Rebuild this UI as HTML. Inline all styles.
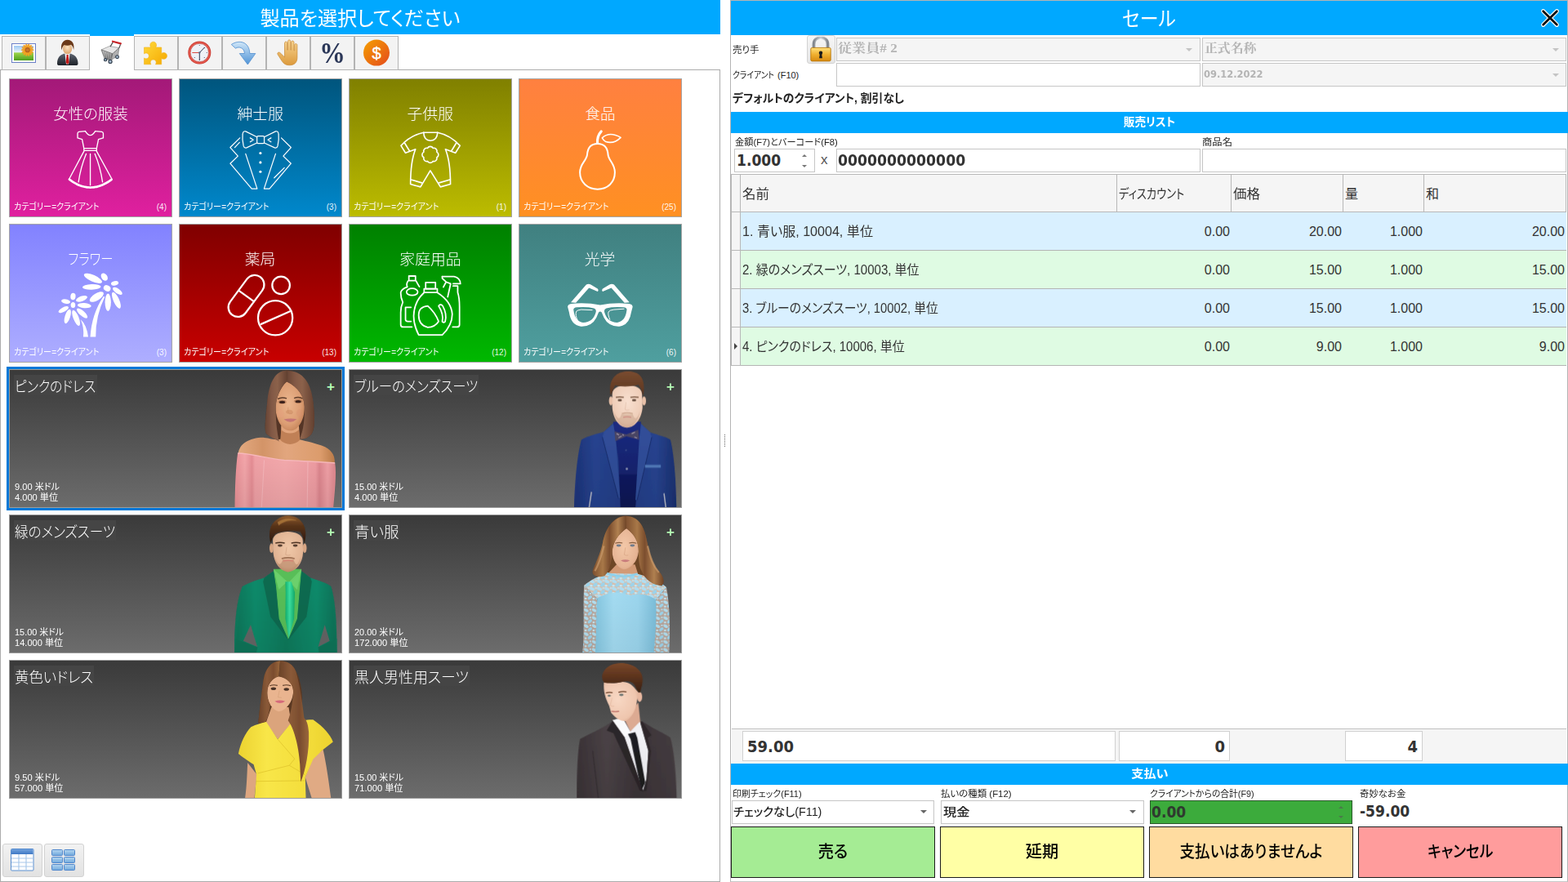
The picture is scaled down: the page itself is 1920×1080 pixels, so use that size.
<!DOCTYPE html>
<html lang="ja">
<head>
<meta charset="utf-8">
<title>セール</title>
<style>
*{box-sizing:border-box;margin:0;padding:0}
html,body{width:1920px;height:1080px;overflow:hidden;background:#fff}
body{position:relative;font-family:"Liberation Sans","Noto Sans CJK JP",sans-serif;color:#222;font-size:12px;font-feature-settings:"palt" 1}
.a{position:absolute}
.t{position:absolute;white-space:nowrap;line-height:1}
.hdr{position:absolute;background:#00a8ff}
#lp{left:0;top:85px;width:882px;height:995px;border:1px solid #ababab;background:#fff}
.tab{position:absolute;top:44px;width:54px;height:42px;background:#f3f3f3;border:1px solid #b4b4b4}
.tab svg{position:absolute;left:0;top:0}
.cat{position:absolute;width:200px;height:170px;border:1px solid #a4a4a4;color:#fff}
.cat .nm{position:absolute;left:0;right:0;top:32px;text-align:center;font-size:18.5px;line-height:21px;font-weight:300;white-space:nowrap}
.cat .cl{position:absolute;left:5px;top:149px;font-size:11px;line-height:14px;white-space:nowrap;transform-origin:0 0}
.cat .ct{position:absolute;right:6px;top:150px;font-size:10px;line-height:14px;white-space:nowrap;color:rgba(255,255,255,.92)}
.cat svg{position:absolute;left:0;top:0}
.prd{position:absolute;width:408px;height:170px;border:1px solid #9c9c9c;color:#fff;background:linear-gradient(#3a3a3a,#6c6c6c);overflow:hidden}
.prd .nm{position:absolute;left:5px;top:6px;font-size:18.5px;line-height:30px;height:25px;font-weight:300;background:#454545;padding:0 1px;white-space:nowrap}
.prd .pr{position:absolute;left:6px;top:137px;font-size:11px;line-height:13px;white-space:nowrap}
.prd .pl{position:absolute;left:388px;top:12px;font-size:17px;font-weight:bold;color:#b4ffb4;line-height:17px}
.prd svg{position:absolute;top:0}
.inp{position:absolute;border:1px solid #c6c6c6;background:#fff}
.dis{background:#f5f5f5}
.lbl{position:absolute;white-space:nowrap;font-size:11px;line-height:14px;color:#222}
.bar{position:absolute;left:895px;width:1025px;height:26px;background:#00a8ff;color:#fff;text-align:center;font-weight:bold;font-size:14px;line-height:25px}
.th{position:absolute;top:213px;height:47px;background:#f5f5f5;border-top:1px solid #b8b8b8;border-right:1px solid #b8b8b8;border-bottom:1px solid #b8b8b8;font-size:16px;line-height:47px;color:#333;white-space:nowrap;padding-left:2px}
.row{position:absolute;left:907px;width:1011px;height:47px;border-bottom:1px solid #b4b4b4;font-size:16px;line-height:46px;color:#333}
.row>span{position:absolute;top:1px;white-space:nowrap}
.row .r{text-align:right}
.ind{position:absolute;left:895px;width:12px;height:47px;background:#f5f5f5;border-left:1px solid #b8b8b8;border-right:1px solid #b8b8b8;border-bottom:1px solid #b8b8b8}
.btn{position:absolute;top:1012px;width:250px;height:63px;border:1px solid #1c1c1c;text-align:center;font-size:20px;font-weight:500;color:#000;line-height:60px;white-space:nowrap}
.fw{display:inline-block;white-space:nowrap;transform-origin:0 50%}
.fc{transform-origin:50% 50%}
.fr{transform-origin:100% 50%}
.bn{font-family:"DejaVu Sans","Noto Sans CJK JP",sans-serif;font-weight:bold}
</style>
</head>
<body>
<div class="hdr" style="left:0;top:0;width:882px;height:42px"></div>
<div class="t" style="left:0;width:882px;top:11px;text-align:center;color:#fff;font-size:24px"><span class="fw fc" style="transform:scaleX(1.004)">製品を選択してください</span></div>
<div class="a" id="lp"></div>
<div class="a" style="left:887px;top:532px;width:1px;height:16px;background:repeating-linear-gradient(#666 0 1px,#fff 1px 2px)"></div>
<div class="a" style="left:3px;top:1033px;width:49px;height:41px;border:1px solid #d2d2d2;border-radius:3px;background:linear-gradient(#f2f2f2,#e2e2e2)">
<svg class="a" style="left:9px;top:5px" width="29" height="28" viewBox="0 0 29 28"><defs><linearGradient id="tb1" x1="0" y1="0" x2="0" y2="1"><stop offset="0" stop-color="#6fa0dc"/><stop offset="1" stop-color="#3f78c4"/></linearGradient><linearGradient id="tb2" x1="0" y1="0" x2="0" y2="1"><stop offset="0" stop-color="#b4d6f0"/><stop offset="1" stop-color="#6fa8dc"/></linearGradient></defs><rect x="0.5" y="0.5" width="27.5" height="26.5" rx="1" fill="#fff" stroke="#5b8fd0"/><rect x="1" y="1" width="26.500" height="6" fill="url(#tb1)"/><g stroke="#a9c8ea" stroke-width="1.2" fill="none"><path d="M1 12h27M1 17h27M1 22h27M10 7v20M19 7v20"/></g></svg></div>
<div class="a" style="left:54px;top:1033px;width:49px;height:41px;border:1px solid #d2d2d2;border-radius:3px;background:linear-gradient(#f2f2f2,#e2e2e2)">
<svg class="a" style="left:8px;top:6px" width="30" height="27" viewBox="0 0 30 27"><g fill="url(#tb2)" stroke="#4f86cc"><rect x="0.5" y="0.5" width="13" height="7" rx="1"/><rect x="15.500" y="0.5" width="13" height="7" rx="1"/><rect x="0.5" y="9.500" width="13" height="7" rx="1"/><rect x="15.500" y="9.500" width="13" height="7" rx="1"/><rect x="0.5" y="18.500" width="13" height="7" rx="1"/><rect x="15.500" y="18.500" width="13" height="7" rx="1"/></g></svg></div>

<div class="tab" style="left:2px"></div>
<div class="tab" style="left:56px"></div>
<div class="tab" style="left:164px"></div>
<div class="tab" style="left:218px"></div>
<div class="tab" style="left:272px"></div>
<div class="tab" style="left:326px"></div>
<div class="tab" style="left:380px"></div>
<div class="tab" style="left:434px"></div>
<div class="a" style="left:110px;top:42px;width:54px;height:45px;background:#fff;border-top:2px solid #00a8ff"></div>
<div class="t" style="left:388px;top:43px;width:38px;height:40px;font-family:'Liberation Serif',serif;font-weight:bold;font-size:35px;line-height:45px;color:#2b3758;text-align:center;transform:scaleX(.90);transform-origin:50% 50%">%</div>
<svg class="a" style="left:0;top:38px" width="500" height="54" viewBox="0 38 500 54">
<defs>
<linearGradient id="gsky" x1="0" y1="0" x2="0" y2="1"><stop offset="0" stop-color="#9fc9f3"/><stop offset=".42" stop-color="#e4f1fa"/><stop offset=".5" stop-color="#9ad44a"/><stop offset="1" stop-color="#4e9e1e"/></linearGradient>
<linearGradient id="gsuit" x1="0" y1="0" x2="0" y2="1"><stop offset="0" stop-color="#5d6470"/><stop offset="1" stop-color="#1d2128"/></linearGradient>
<linearGradient id="gpuz" x1="0" y1="0" x2="1" y2="1"><stop offset="0" stop-color="#ffd93a"/><stop offset="1" stop-color="#f5a800"/></linearGradient>
<linearGradient id="garr" x1="0" y1="0" x2="0" y2="1"><stop offset="0" stop-color="#cfe6f8"/><stop offset="1" stop-color="#4f93d6"/></linearGradient>
<linearGradient id="ghand" x1="0" y1="0" x2="0" y2="1"><stop offset="0" stop-color="#f8d592"/><stop offset="1" stop-color="#dc9a3c"/></linearGradient>
<linearGradient id="gcoin" x1="0" y1="0" x2="1" y2="1"><stop offset="0" stop-color="#f5a000"/><stop offset="1" stop-color="#e44a1c"/></linearGradient>
<linearGradient id="gcart" x1="0" y1="0" x2="0" y2="1"><stop offset="0" stop-color="#b4b4b4"/><stop offset="1" stop-color="#505050"/></linearGradient>
<radialGradient id="gface" cx=".5" cy=".4" r=".6"><stop offset="0" stop-color="#fbe3c4"/><stop offset="1" stop-color="#dba46c"/></radialGradient>
</defs>
<!-- picture -->
<rect x="14.5" y="53.5" width="29" height="23" fill="#fff" stroke="#6c80c8"/>
<rect x="17" y="56" width="24" height="18" fill="url(#gsky)"/>
<g fill="#f5a623" stroke="#e98a1c" stroke-width=".3"><ellipse cx="38.30" cy="61.20" rx="3.1" ry="1.15" transform="rotate(0 38.30 61.20)"/><ellipse cx="37.84" cy="63.20" rx="3.1" ry="1.15" transform="rotate(26 37.84 63.20)"/><ellipse cx="36.57" cy="64.80" rx="3.1" ry="1.15" transform="rotate(51 36.57 64.80)"/><ellipse cx="34.72" cy="65.68" rx="3.1" ry="1.15" transform="rotate(77 34.72 65.68)"/><ellipse cx="32.68" cy="65.68" rx="3.1" ry="1.15" transform="rotate(103 32.68 65.68)"/><ellipse cx="30.83" cy="64.80" rx="3.1" ry="1.15" transform="rotate(129 30.83 64.80)"/><ellipse cx="29.56" cy="63.20" rx="3.1" ry="1.15" transform="rotate(154 29.56 63.20)"/><ellipse cx="29.10" cy="61.20" rx="3.1" ry="1.15" transform="rotate(180 29.10 61.20)"/><ellipse cx="29.56" cy="59.20" rx="3.1" ry="1.15" transform="rotate(206 29.56 59.20)"/><ellipse cx="30.83" cy="57.60" rx="3.1" ry="1.15" transform="rotate(231 30.83 57.60)"/><ellipse cx="32.68" cy="56.72" rx="3.1" ry="1.15" transform="rotate(257 32.68 56.72)"/><ellipse cx="34.72" cy="56.72" rx="3.1" ry="1.15" transform="rotate(283 34.72 56.72)"/><ellipse cx="36.57" cy="57.60" rx="3.1" ry="1.15" transform="rotate(309 36.57 57.60)"/><ellipse cx="37.84" cy="59.20" rx="3.1" ry="1.15" transform="rotate(334 37.84 59.20)"/></g>
<circle cx="33.7" cy="61.2" r="3.1" fill="#b5621e"/><circle cx="33.7" cy="61.2" r="1.8" fill="#c9772a"/>
<!-- user -->
<path d="M70 78c0-8 4-11 9-12.500l3.500 3 3.500-3c5 1.500 9.500 4.500 9.500 12.500c0 1.500-1 2-2.500 2h-20.500c-1.500 0-2.500-.5-2.500-2z" fill="url(#gsuit)"/>
<path d="M79.500 65.500l3 3 3-3-1.500 13h-3z" fill="#fff"/>
<path d="M81.600 67h2l.9 9.500-1.900 2.500-1.900-2.500z" fill="#c41818"/>
<ellipse cx="82.600" cy="59.500" rx="5.600" ry="6.800" fill="url(#gface)"/>
<path d="M75.400 61.500c-1.600-7 1.600-12.700 7.300-12.700c5.700 0 9 5 7.400 12.500c-.4-3.400-1.400-5.400-3.400-6.600c-2.400 1.200-5.800 1.200-8 .2c-1.800 1.400-2.800 3.600-3.300 6.600z" fill="#6b3a1a"/>
<!-- cart -->
<g transform="translate(0,30) scale(.14583)">
<path d="M850 212L920 182L1000 196L945 246Z" fill="#e6e6e6" stroke="#7a7a7a" stroke-width="4"/>
<path d="M850 212L945 246L928 302L878 286Z" fill="url(#gcart)" stroke="#5e5e5e" stroke-width="4"/>
<path d="M945 246L1000 196L990 262L928 302Z" fill="#9c9c9c" stroke="#5e5e5e" stroke-width="4"/>
<path d="M868 222l14 62M886 228l12 62M905 234l9 62M925 241l2 58" stroke="#dcdcdc" stroke-width="4" fill="none"/>
<path d="M960 236l-10 52M975 222l-8 54M988 210l-6 54" stroke="#e0e0e0" stroke-width="4" fill="none"/>
<path d="M948 148L926 186M1012 166L1000 198" stroke="#4a4a4a" stroke-width="8" fill="none"/>
<path d="M946 142L1014 160" stroke="#c8262a" stroke-width="15" stroke-linecap="round" fill="none"/>
<g fill="#a8bcd0" stroke="#34414f" stroke-width="8"><circle cx="885" cy="296" r="11"/><circle cx="926" cy="312" r="14"/><circle cx="984" cy="272" r="13"/></g>
</g>
<!-- puzzle -->
<path d="M176.500 58h8.200c-1.800-2.400-.7-6.800 3-6.800s4.800 4.400 3 6.800h7v7.400c2.400-1.800 6.800-.8 6.800 3s-4.400 4.800-6.800 3v7.400h-7.200c1.600-2.400.5-5.800-2.800-5.800s-4.400 3.400-2.800 5.800h-8.400v-7.800c2.400 1.800 5.800.7 5.800-2.600s-3.400-4.400-5.800-2.600z" fill="url(#gpuz)" stroke="#f0b21c" stroke-width=".6"/>
<!-- clock -->
<circle cx="244.300" cy="64.500" r="14" fill="#c63a32"/>
<circle cx="244.300" cy="64.500" r="13.300" fill="#e2554a"/>
<circle cx="244.300" cy="64.500" r="11.200" fill="#eef1f7" stroke="#b8362e" stroke-width=".6"/>
<g fill="#4a556c"><circle cx="244.300" cy="55.500" r=".6"/><circle cx="253.300" cy="64.500" r=".6"/><circle cx="244.300" cy="73.500" r=".6"/><circle cx="250.300" cy="70.500" r=".6"/><circle cx="238.300" cy="70.500" r=".6"/><circle cx="250.600" cy="58.500" r=".6"/></g>
<path d="M244.300 64.500v9.300M244.300 64.500l6.200-6.500" stroke="#2a3650" stroke-width="1" fill="none"/>
<path d="M244.300 64.500h-9" stroke="#d8352c" stroke-width=".9" fill="none"/>
<circle cx="244.300" cy="64.500" r="1.200" fill="#5a6a8a"/>
<!-- arrow -->
<path d="M283.300 54.500c9-6 22-4 22.500 11h7l-9.500 13.500-10-13.500h6.200c-.3-7.200-7.300-9-11-6.300z" fill="url(#garr)" stroke="#5d96d2" stroke-width=".9" stroke-linejoin="round"/>
<!-- hand -->
<g transform="translate(3.500,0) scale(1.06,1) translate(-20,0)"><path d="M345.500 64v-11.300c0-2.200 3-2.200 3 0v8.500h.7v-10.600c0-2.300 3.200-2.300 3.200 0v10.600h.7v-9.400c0-2.300 3.200-2.300 3.200 0v10h.7v-6.600c0-2.200 3-2.200 3 0v15.300c0 6-3.300 9.300-9 9.300c-4.200 0-6.500-1.700-8.700-5.200l-4.800-8c-1-1.900 1.300-3.500 2.900-1.800l5.100 5.200z" fill="url(#ghand)" stroke="#c98a36" stroke-width=".7" stroke-linejoin="round"/></g>
<!-- coin -->
<circle cx="461" cy="64.600" r="16" fill="url(#gcoin)"/>
<text x="461" y="71.500" text-anchor="middle" font-family="Liberation Sans, sans-serif" font-size="20" fill="#fff" stroke="#fff" stroke-width=".4">$</text>
</svg>

<div class="cat" style="left:11px;top:96px;background:linear-gradient(#a31978,#e0209f)"><div class="nm"><span class="fw fc" style="transform:scaleX(0.995)">女性の服装</span></div><div class="cl"><span class="fw" style="transform:scaleX(0.917)">カテゴリー=クライアント</span></div><div class="ct">(4)</div></div>
<svg class="a" style="left:50px;top:120px" width="120" height="120" viewBox="0 0 1080 1080"><g stroke="#fff" fill="none" stroke-linecap="round" stroke-linejoin="round" stroke-width="12">
<path d="M490 365L420 372Q405 375 405 392L405 440L455 455L475 555M600 365L672 372Q688 375 688 392L688 440L635 455L615 555"/>
<path d="M490 365Q545 455 600 365"/>
<rect x="475" y="555" width="140" height="25" rx="6"/>
<path d="M478 582L312 893M612 582L783 893"/>
<path d="M500 615Q440 760 415 925M545 615L545 960M595 615Q655 760 680 925"/>
<path d="M314 897Q545 1075 781 897" stroke-width="24" stroke-dasharray="30 4"/>
</g></svg>
<div class="cat" style="left:219px;top:96px;background:linear-gradient(#00557d,#0088cc)"><div class="nm"><span class="fw fc" style="transform:scaleX(1.018)">紳士服</span></div><div class="cl"><span class="fw" style="transform:scaleX(0.917)">カテゴリー=クライアント</span></div><div class="ct">(3)</div></div>
<svg class="a" style="left:258px;top:120px" width="120" height="120" viewBox="0 0 1080 1080"><g stroke="#fff" fill="none" stroke-linecap="round" stroke-linejoin="round" stroke-width="11">
<path d="M510 430L385 368Q355 360 352 400Q345 460 362 530Q370 555 395 548L510 495"/>
<path d="M590 430L715 368Q745 360 748 400Q755 460 738 530Q730 555 705 548L590 495"/>
<rect x="510" y="420" width="80" height="80" rx="12"/>
<path d="M435 440L470 462L435 484M665 440L630 462L665 484"/>
<path d="M322 440L215 545L300 640L215 722L452 1000L512 1000L385 615"/>
<path d="M778 440L885 545L800 640L885 722L648 1000L588 1000L715 615"/>
<path d="M265 545L318 490M700 880L812 768"/>
</g><g fill="#fff"><circle cx="548" cy="607" r="14"/><circle cx="548" cy="710" r="14"/><circle cx="548" cy="812" r="14"/></g></svg>
<div class="cat" style="left:427px;top:96px;background:linear-gradient(#808000,#bcbc00)"><div class="nm"><span class="fw fc" style="transform:scaleX(1.018)">子供服</span></div><div class="cl"><span class="fw" style="transform:scaleX(0.917)">カテゴリー=クライアント</span></div><div class="ct">(1)</div></div>
<svg class="a" style="left:466px;top:120px" width="120" height="120" viewBox="0 0 1080 1080"><g stroke="#fff" fill="none" stroke-linecap="round" stroke-linejoin="round" stroke-width="15">
<path d="M475 380L628 380"/>
<path d="M475 383Q478 470 550 470Q622 470 628 383"/>
<path d="M475 380Q330 410 225 525L275 605L385 565Q330 700 330 950L440 980L548 800L660 980L770 950Q770 700 715 565L825 605L875 525Q770 410 628 380"/>
<path d="M262 490L320 585M838 490L780 585M335 900L455 935M765 900L645 935"/>
<path d="M518 553A34 34 0 0 1 578 553A34 34 0 0 1 620 595A34 34 0 0 1 620 655A34 34 0 0 1 578 697A34 34 0 0 1 518 697A34 34 0 0 1 476 655A34 34 0 0 1 476 595A34 34 0 0 1 518 553Z"/>
</g></svg>
<div class="cat" style="left:635px;top:96px;background:linear-gradient(#ff8040,#ff9022)"><div class="nm"><span class="fw fc" style="transform:scaleX(1.000)">食品</span></div><div class="cl"><span class="fw" style="transform:scaleX(0.917)">カテゴリー=クライアント</span></div><div class="ct">(25)</div></div>
<svg class="a" style="left:674px;top:120px" width="120" height="120" viewBox="0 0 1080 1080"><g stroke="#fff" fill="none" stroke-linecap="round" stroke-linejoin="round" stroke-width="18">
<path d="M520 505C440 505 410 560 405 625C400 690 325 720 325 820C325 930 410 1005 520 1005C630 1005 710 930 710 820C710 720 640 690 635 625C630 560 600 505 520 505Z"/>
<path d="M518 500Q512 420 560 368" stroke-width="28"/>
<path d="M570 440Q650 365 775 435Q700 510 610 482Q585 468 570 440Z" stroke-width="14"/>
</g></svg>
<div class="cat" style="left:11px;top:274px;background:linear-gradient(#8282ff,#aeaeff)"><div class="nm"><span class="fw fc" style="transform:scaleX(0.833)">フラワー</span></div><div class="cl"><span class="fw" style="transform:scaleX(0.917)">カテゴリー=クライアント</span></div><div class="ct">(3)</div></div>
<svg class="a" style="left:50px;top:298px" width="120" height="120" viewBox="0 0 1080 1080"><g fill="#fff"><ellipse cx="575" cy="385" rx="108" ry="36" transform="rotate(24 575 385)"/><ellipse cx="700" cy="370" rx="32" ry="46" transform="rotate(-35 700 370)"/><ellipse cx="815" cy="440" rx="42" ry="24" transform="rotate(-15 815 440)"/><ellipse cx="560" cy="480" rx="102" ry="30" transform="rotate(-2 560 480)"/><ellipse cx="845" cy="525" rx="62" ry="27" transform="rotate(35 845 525)"/><ellipse cx="615" cy="590" rx="88" ry="38" transform="rotate(-32 615 590)"/><ellipse cx="740" cy="650" rx="33" ry="96" transform="rotate(0 740 650)"/><ellipse cx="832" cy="628" rx="32" ry="98" transform="rotate(-24 832 628)"/><ellipse cx="730" cy="495" rx="40" ry="32" transform="rotate(25 730 495)"/><ellipse cx="355" cy="585" rx="28" ry="38" transform="rotate(5 355 585)"/><ellipse cx="450" cy="610" rx="66" ry="28" transform="rotate(-20 450 610)"/><ellipse cx="275" cy="640" rx="50" ry="24" transform="rotate(10 275 640)"/><ellipse cx="480" cy="685" rx="76" ry="28" transform="rotate(5 480 685)"/><ellipse cx="250" cy="730" rx="62" ry="25" transform="rotate(-28 250 730)"/><ellipse cx="455" cy="770" rx="76" ry="28" transform="rotate(42 455 770)"/><ellipse cx="295" cy="805" rx="29" ry="82" transform="rotate(18 295 805)"/><ellipse cx="388" cy="822" rx="30" ry="92" transform="rotate(-22 388 822)"/><ellipse cx="355" cy="680" rx="25" ry="32" transform="rotate(0 355 680)"/><path d="M690 585Q560 780 545 1030L605 1030Q602 800 705 590Z"/><path d="M438 838Q505 900 522 1030L468 1030Q478 925 438 838Z"/></g></svg>
<div class="cat" style="left:219px;top:274px;background:linear-gradient(#800000,#c80000)"><div class="nm"><span class="fw fc" style="transform:scaleX(1.014)">薬局</span></div><div class="cl"><span class="fw" style="transform:scaleX(0.917)">カテゴリー=クライアント</span></div><div class="ct">(13)</div></div>
<svg class="a" style="left:258px;top:298px" width="120" height="120" viewBox="0 0 1080 1080"><g stroke="#fff" fill="none" stroke-linecap="round" stroke-linejoin="round" stroke-width="20">
<rect x="287" y="320" width="210" height="520" rx="105" transform="rotate(36.5 392 580)"/>
<path d="M310 520L476 640"/>
<circle cx="775" cy="462" r="97"/>
<circle cx="712" cy="822" r="190"/>
<path d="M556 890L884 745"/>
</g></svg>
<div class="cat" style="left:427px;top:274px;background:linear-gradient(#008000,#00b800)"><div class="nm"><span class="fw fc" style="transform:scaleX(1.020)">家庭用品</span></div><div class="cl"><span class="fw" style="transform:scaleX(0.917)">カテゴリー=クライアント</span></div><div class="ct">(12)</div></div>
<svg class="a" style="left:466px;top:298px" width="120" height="120" viewBox="0 0 1080 1080"><g stroke="#fff" fill="none" stroke-linecap="round" stroke-linejoin="round" stroke-width="16">
<path d="M312 360H385V410H312Z"/>
<path d="M302 415Q280 450 295 480Q225 505 222 545Q222 600 245 650Q222 700 222 760V895Q222 922 250 922H345"/>
<path d="M392 415Q410 450 428 478"/>
<ellipse cx="348" cy="535" rx="62" ry="38"/>
<path d="M335 705H275V840Q275 860 300 860H335"/>
<path d="M497 430H605V500H497Z"/>
<path d="M480 500H625V542H480Z"/>
<path d="M480 542Q370 640 365 800Q365 900 420 1010H680Q790 900 790 780Q780 640 625 542"/>
<path d="M420 790Q420 700 520 690Q600 760 640 860Q600 925 520 925Q420 905 420 790Z"/>
<path d="M640 690Q660 660 685 690Q735 780 712 862Q700 880 680 862Q698 780 640 690Z"/>
<path d="M680 365H810Q878 380 880 445H800"/>
<path d="M680 365V385L722 425L692 482M772 445L740 590M722 425L772 445"/>
<path d="M800 470H850V540Q870 600 870 700V895Q870 922 840 922H795"/>
</g></svg>
<div class="cat" style="left:635px;top:274px;background:linear-gradient(#408080,#4f9f9f)"><div class="nm"><span class="fw fc" style="transform:scaleX(1.014)">光学</span></div><div class="cl"><span class="fw" style="transform:scaleX(0.917)">カテゴリー=クライアント</span></div><div class="ct">(6)</div></div>
<svg class="a" style="left:674px;top:298px" width="120" height="120" viewBox="0 0 1080 1080"><g fill="#fff">
<path d="M225 650L395 455Q420 440 445 455L520 500Q535 520 520 530L425 490L280 655Z"/>
<path d="M871 650L701 455Q676 440 651 455L576 500Q561 520 576 530L671 490L816 655Z"/>
<path fill-rule="evenodd" d="M190 700Q190 670 230 665Q400 650 548 680Q700 650 866 665Q906 670 906 700L890 760Q870 900 760 915Q640 920 590 820L565 760Q548 745 531 760L506 820Q456 920 336 915Q226 900 206 760ZM255 735Q250 710 290 705Q400 695 480 715Q510 725 500 760Q470 870 360 872Q270 860 255 735ZM841 735Q846 710 806 705Q696 695 616 715Q586 725 596 760Q626 870 736 872Q826 860 841 735Z"/>
</g>
<g stroke="#fff" fill="none" stroke-width="9" stroke-linecap="round"><path d="M300 850Q270 790 285 750Q295 735 340 730L460 735"/><path d="M655 840Q630 780 640 755Q650 735 700 730L810 722"/></g></svg>

<svg width="0" height="0" style="position:absolute"><defs>
<linearGradient id="h1" x1="0" y1="0" x2="1" y2="0"><stop offset="0" stop-color="#664434"/><stop offset=".3" stop-color="#825945"/><stop offset=".55" stop-color="#8c624b"/><stop offset="1" stop-color="#624030"/></linearGradient>
<linearGradient id="sk1" x1="0" y1="0" x2="1" y2="0"><stop offset="0" stop-color="#e2a981"/><stop offset=".5" stop-color="#e9b892"/><stop offset="1" stop-color="#cf935f"/></linearGradient>
<linearGradient id="sh1" x1="0" y1="0" x2="1" y2="0"><stop offset="0" stop-color="#e3aa80"/><stop offset=".25" stop-color="#d39468"/><stop offset=".5" stop-color="#e2a67e"/><stop offset=".85" stop-color="#dc9c6c"/><stop offset="1" stop-color="#b97a48"/></linearGradient>
<linearGradient id="dr1" x1="0" y1="0" x2="1" y2="0"><stop offset="0" stop-color="#e99096"/><stop offset=".1" stop-color="#f3a6aa"/><stop offset=".17" stop-color="#e58d94"/><stop offset=".2" stop-color="#f0a1a6"/><stop offset=".5" stop-color="#f4a9ac"/><stop offset=".8" stop-color="#ee9ca2"/><stop offset=".84" stop-color="#dd868e"/><stop offset=".92" stop-color="#f0a0a6"/><stop offset="1" stop-color="#dc858c"/></linearGradient>
<linearGradient id="su2" x1="0" y1="0" x2="1" y2="0"><stop offset="0" stop-color="#1c3378"/><stop offset=".2" stop-color="#27438f"/><stop offset=".5" stop-color="#213b84"/><stop offset=".8" stop-color="#27438f"/><stop offset="1" stop-color="#1a2f6e"/></linearGradient>
<linearGradient id="st2" x1="0" y1="0" x2="0" y2="1"><stop offset="0" stop-color="#1b2a80"/><stop offset=".6" stop-color="#16236e"/><stop offset=".62" stop-color="#0f1a60"/><stop offset="1" stop-color="#0c1552"/></linearGradient>
<linearGradient id="h2" x1="0" y1="0" x2="0" y2="1"><stop offset="0" stop-color="#7a4c30"/><stop offset="1" stop-color="#5a3520"/></linearGradient>
<linearGradient id="su3" x1="0" y1="0" x2="1" y2="0"><stop offset="0" stop-color="#0a7458"/><stop offset=".2" stop-color="#118a6a"/><stop offset=".5" stop-color="#0c7a5c"/><stop offset=".8" stop-color="#118a6a"/><stop offset="1" stop-color="#0a7056"/></linearGradient>
<linearGradient id="ti3" x1="0" y1="0" x2="1" y2="0"><stop offset="0" stop-color="#10b070"/><stop offset=".45" stop-color="#3ce0a0"/><stop offset="1" stop-color="#10a868"/></linearGradient>
<linearGradient id="h3" x1="0" y1="0" x2="0" y2="1"><stop offset="0" stop-color="#8e5c2c"/><stop offset=".35" stop-color="#5a341a"/><stop offset="1" stop-color="#2a180e"/></linearGradient>
<linearGradient id="h4" x1="0" y1="0" x2="1" y2="0"><stop offset="0" stop-color="#7e5030"/><stop offset=".3" stop-color="#a87848"/><stop offset=".5" stop-color="#7c4e2e"/><stop offset=".75" stop-color="#b08050"/><stop offset="1" stop-color="#6e4428"/></linearGradient>
<linearGradient id="dr4" x1="0" y1="0" x2="1" y2="0"><stop offset="0" stop-color="#84c6e0"/><stop offset=".3" stop-color="#a4dcf2"/><stop offset=".7" stop-color="#9cd6ee"/><stop offset="1" stop-color="#7cbeda"/></linearGradient>
<pattern id="lace" width="46" height="46" patternUnits="userSpaceOnUse"><rect width="46" height="46" fill="#c9b6ac"/><ellipse cx="12" cy="12" rx="14" ry="8" fill="#a6dbf0" transform="rotate(30 12 12)"/><ellipse cx="34" cy="30" rx="13" ry="8" fill="#8ecfe8" transform="rotate(-40 34 30)"/><ellipse cx="10" cy="38" rx="8" ry="6" fill="#b8e4f4"/></pattern>
<linearGradient id="h5" x1="0" y1="0" x2="1" y2="0"><stop offset="0" stop-color="#6a4228"/><stop offset=".4" stop-color="#8a5a38"/><stop offset=".7" stop-color="#7a4c2e"/><stop offset="1" stop-color="#9a683c"/></linearGradient>
<linearGradient id="dr5" x1="0" y1="0" x2="1" y2="0"><stop offset="0" stop-color="#ecd230"/><stop offset=".3" stop-color="#f8e648"/><stop offset=".7" stop-color="#f4de3c"/><stop offset="1" stop-color="#ecd22e"/></linearGradient>
<linearGradient id="su6" x1="0" y1="0" x2="1" y2="0"><stop offset="0" stop-color="#3a3236"/><stop offset=".3" stop-color="#4a4246"/><stop offset=".6" stop-color="#3c3438"/><stop offset="1" stop-color="#443c40"/></linearGradient>
<linearGradient id="h6" x1="0" y1="0" x2="1" y2="0"><stop offset="0" stop-color="#5e3520"/><stop offset=".5" stop-color="#6e3e24"/><stop offset="1" stop-color="#3a2014"/></linearGradient>
<radialGradient id="fc1" cx=".45" cy=".45" r=".65"><stop offset="0" stop-color="#ebb68e"/><stop offset=".65" stop-color="#dc9e74"/><stop offset="1" stop-color="#be7c52"/></radialGradient>
<radialGradient id="fc2" cx=".5" cy=".4" r=".7"><stop offset="0" stop-color="#f8e0d0"/><stop offset=".7" stop-color="#efcdb8"/><stop offset="1" stop-color="#d8a890"/></radialGradient>
<radialGradient id="fc3" cx=".5" cy=".4" r=".7"><stop offset="0" stop-color="#f0c8a8"/><stop offset=".7" stop-color="#e2b494"/><stop offset="1" stop-color="#c08a68"/></radialGradient>
<radialGradient id="fc4" cx=".45" cy=".45" r=".7"><stop offset="0" stop-color="#f3c8a8"/><stop offset=".7" stop-color="#e6b494"/><stop offset="1" stop-color="#c89070"/></radialGradient>
<radialGradient id="fc5" cx=".45" cy=".45" r=".7"><stop offset="0" stop-color="#f0bf9a"/><stop offset=".7" stop-color="#e3ac86"/><stop offset="1" stop-color="#c48a62"/></radialGradient>
<radialGradient id="fc6" cx=".4" cy=".45" r=".75"><stop offset="0" stop-color="#f8d8c4"/><stop offset=".7" stop-color="#efc6ae"/><stop offset="1" stop-color="#d09a80"/></radialGradient>
<linearGradient id="h6v" x1="0" y1="0" x2="0" y2="1"><stop offset="0" stop-color="#7a482a"/><stop offset=".5" stop-color="#5a321c"/><stop offset="1" stop-color="#38200f"/></linearGradient>
<linearGradient id="shd" x1="0" y1="0" x2="0" y2="1"><stop offset="0" stop-color="#000" stop-opacity="0"/><stop offset="1" stop-color="#000" stop-opacity=".22"/></linearGradient>
<pattern id="lace2" width="60" height="60" patternUnits="userSpaceOnUse"><rect width="60" height="60" fill="#b9a59a"/><ellipse cx="16" cy="16" rx="20" ry="11" fill="#b2e0f2" transform="rotate(30 16 16)"/><ellipse cx="44" cy="40" rx="19" ry="11" fill="#9ed6ee" transform="rotate(-40 44 40)"/><ellipse cx="12" cy="48" rx="9" ry="7" fill="#c8eaf6"/><ellipse cx="48" cy="10" rx="8" ry="6" fill="#c0e6f4"/></pattern>
<pattern id="lace3" width="56" height="56" patternUnits="userSpaceOnUse"><rect width="56" height="56" fill="#d9bca8"/><ellipse cx="16" cy="14" rx="22" ry="13" fill="#b0def2" transform="rotate(25 16 14)"/><ellipse cx="42" cy="38" rx="21" ry="13" fill="#9cd4ec" transform="rotate(-35 42 38)"/><ellipse cx="10" cy="46" rx="10" ry="8" fill="#c4e8f6"/><ellipse cx="46" cy="8" rx="9" ry="7" fill="#bce4f4"/></pattern>
<filter id="soft" x="-5%" y="-5%" width="110%" height="110%"><feGaussianBlur stdDeviation="2.600"/></filter>
</defs></svg>

<div class="a" style="left:8px;top:449px;width:414px;height:176px;background:#0078d7"></div>
<div class="prd" style="left:11px;top:452px"><svg style="left:258px;top:-3px" width="160" height="175" viewBox="0 0 987 1080"><g filter="url(#soft)"><path d="M510 22C420 25 372 110 352 270C338 390 330 470 345 500C380 530 420 545 442 558L600 538C625 545 662 535 690 500C715 450 712 380 702 280C690 150 640 40 510 22Z" fill="#543628"/>
<path d="M135 650C140 578 220 528 330 530C380 535 420 552 458 540L458 440L592 440L598 545C650 558 720 572 790 600C850 630 868 680 862 728L500 770Z" fill="url(#sh1)"/>
<path d="M458 470C490 505 560 505 592 470L600 548C560 590 490 590 452 548Z" fill="#c08056"/>
<path d="M500 106C455 150 420 220 416 300C416 380 450 442 490 468C520 484 550 479 575 459C615 422 637 360 634 290C632 220 590 150 500 106Z" fill="url(#fc1)"/>
<path d="M432 238Q462 220 500 234" stroke="#5e3c2a" stroke-width="9" fill="none"/><path d="M556 232Q592 216 622 236" stroke="#5e3c2a" stroke-width="9" fill="none"/><ellipse cx="466" cy="260" rx="32" ry="17" fill="#a8704e" opacity=".55"/><ellipse cx="587" cy="255" rx="32" ry="17" fill="#a8704e" opacity=".55"/>
<ellipse cx="466" cy="262" rx="22" ry="10" fill="#3c241a"/><ellipse cx="587" cy="257" rx="22" ry="10" fill="#3c241a"/>
<path d="M512 300Q505 340 520 350Q540 355 548 340" stroke="#c98c66" stroke-width="6" fill="none" opacity=".55"/>
<path d="M478 392Q527 380 576 390Q530 432 478 392Z" fill="#c47474"/><ellipse cx="520" cy="335" rx="26" ry="16" fill="#c88458" opacity=".45"/><ellipse cx="452" cy="350" rx="26" ry="30" fill="#e8a080" opacity=".35"/><ellipse cx="598" cy="345" rx="24" ry="30" fill="#d89070" opacity=".35"/>
<path d="M505 24C425 20 372 92 354 250C340 400 330 470 345 500C380 530 420 545 442 558C425 480 416 400 418 300C423 220 450 150 500 106Z" fill="url(#h1)"/>
<path d="M505 24C625 24 684 118 701 262C712 380 715 450 690 500C662 535 625 545 598 538C625 480 637 400 634 290C630 220 590 150 500 106Z" fill="url(#h1)"/>
<path d="M130 648C250 650 350 690 480 700C620 705 760 715 865 722C878 800 862 950 852 1060L108 1060C110 900 115 750 130 648Z" fill="url(#dr1)"/>
<path d="M130 648C250 650 350 690 480 700C620 705 760 715 865 722" stroke="#f8b8bc" stroke-width="9" fill="none"/>
<path d="M330 700L310 1060M660 715L655 1060" stroke="#f8bcc0" stroke-width="7" fill="none" opacity=".7"/>
<path d="M108 1060L130 648L865 722L852 1060Z" fill="url(#shd)" opacity=".35"/></g></svg><div class="nm" style="width:102px"><span class="fw" style="transform:scaleX(0.858)">ピンクのドレス</span></div><div class="pr"><span class="fw" style="transform:scaleX(1.009)">9.00 米ドル</span><br><span class="fw" style="transform:scaleX(1.009)">4.000 単位</span></div><div class="pl">+</div></div>
<div class="prd" style="left:427px;top:452px"><svg style="left:258px;top:-3px" width="160" height="175" viewBox="0 0 987 1080"><g filter="url(#soft)"><path d="M160 545C200 520 280 500 330 485L400 420L605 420L680 490C740 510 800 525 832 545C860 650 875 850 878 1060L105 1060C110 850 130 650 160 545Z" fill="url(#su2)"/>
<path d="M400 410L610 410L600 700L568 1060L455 1060L440 700Z" fill="url(#st2)"/>
<path d="M330 485L400 425L418 520L452 985L440 990L318 525Z" fill="#304d98"/>
<path d="M680 490L610 425L598 520L568 1000L580 1005L692 525Z" fill="#304d98"/>
<path d="M318 525L440 990M692 525L580 1005" stroke="#182c6c" stroke-width="6" fill="none"/>
<path d="M236 940L218 1060M784 950L798 1060" stroke="#b8bcc8" stroke-width="9" fill="none"/>
<rect x="640" y="735" width="120" height="22" fill="#4f78b8"/>
<circle cx="497" cy="625" r="7" fill="#3a4a8a"/><circle cx="503" cy="766" r="9" fill="#8a90b0"/>
<path d="M410 482L500 505L590 470L596 545L500 520L416 556Z" fill="#4a4464"/>
<path d="M425 500l20 10M440 530l25-12M540 500l25-12M560 525l20 8M470 505l10 8" stroke="#a49cae" stroke-width="7" fill="none"/>
<ellipse cx="383" cy="252" rx="15" ry="34" fill="#e8c0a8"/><ellipse cx="633" cy="252" rx="15" ry="34" fill="#e8c0a8"/>
<path d="M393 200C390 110 618 110 618 200L622 300C616 380 570 452 505 454C440 452 398 380 393 300Z" fill="url(#fc2)"/>
<path d="M405 330C420 400 460 452 505 454C550 452 592 400 602 330C585 385 565 405 548 352L462 352C448 405 428 385 405 330Z" fill="#b89478" opacity=".38"/>
<path d="M465 348Q505 336 548 348" stroke="#a87c5e" stroke-width="8" fill="none" opacity=".6"/>
<path d="M476 376Q505 368 536 376" stroke="#d08a80" stroke-width="8" fill="none"/>
<path d="M420 226Q450 218 480 226M530 226Q560 218 592 226" stroke="#6a4630" stroke-width="8" fill="none"/>
<ellipse cx="450" cy="247" rx="16" ry="9" fill="#4a3224" opacity=".85"/><ellipse cx="558" cy="247" rx="16" ry="9" fill="#4a3224" opacity=".85"/>
<path d="M497 262L490 318Q505 328 522 320" stroke="#dab49c" stroke-width="6" fill="none" opacity=".55"/>
<path d="M382 215C366 150 380 90 420 58C460 22 560 18 600 58C634 90 638 150 626 216C618 178 606 150 590 130C540 146 450 146 414 134C400 160 390 186 382 215Z" fill="url(#h2)"/>
<path d="M105 1060L160 545L832 545L878 1060Z" fill="url(#shd)" opacity=".3"/></g></svg><div class="nm" style="width:153px"><span class="fw" style="transform:scaleX(0.888)">ブルーのメンズスーツ</span></div><div class="pr"><span class="fw" style="transform:scaleX(0.992)">15.00 米ドル</span><br><span class="fw" style="transform:scaleX(1.015)">4.000 単位</span></div><div class="pl">+</div></div>
<div class="prd" style="left:11px;top:630px"><svg style="left:258px;top:-3px" width="160" height="175" viewBox="0 0 987 1080"><g filter="url(#soft)"><path d="M165 555C220 525 290 500 330 490L400 440L610 440L680 490C760 515 810 535 835 555C865 650 880 800 880 1060L105 1060C105 800 125 650 165 555Z" fill="url(#su3)"/>
<path d="M228 845C243 900 262 960 278 1012L172 968Z" fill="#666"/>
<path d="M788 845C773 900 753 960 738 1012L825 968Z" fill="#666"/>
<path d="M105 950L280 1015L270 1060L105 1060Z" fill="#0b7458"/>
<path d="M880 950L738 1015L745 1060L880 1060Z" fill="#0b7458"/>
<path d="M400 425L612 425L602 560L582 800L512 955L440 800L418 560Z" fill="#58be58"/>
<path d="M400 425L505 520L440 578ZM612 425L520 520L580 582Z" fill="#6cd06c"/>
<path d="M490 520L536 520L562 600L556 800L515 948L490 800L492 600Z" fill="url(#ti3)"/>
<path d="M330 490L400 440L420 560L442 800L512 962L378 785L322 520Z" fill="#0a6a50"/>
<path d="M680 490L612 440L600 560L580 800L512 962L650 785L690 520Z" fill="#0a6a50"/>
<ellipse cx="385" cy="266" rx="15" ry="36" fill="#d8a684"/><ellipse cx="636" cy="266" rx="15" ry="36" fill="#d8a684"/>
<path d="M395 210C390 120 622 120 622 210L624 300C620 380 575 442 510 447C450 442 405 380 398 300Z" fill="url(#fc3)"/>
<path d="M412 330C425 400 465 445 510 447C555 443 598 400 608 330C590 395 570 412 552 354L470 354C455 408 432 395 412 330Z" fill="#8a5e40" opacity=".3"/>
<path d="M462 346Q510 332 560 346" stroke="#8a5a3e" stroke-width="10" fill="none" opacity=".8"/>
<path d="M472 364Q510 356 550 364" stroke="#d88474" stroke-width="9" fill="none"/>
<path d="M415 228Q450 220 485 228M535 228Q570 220 605 228" stroke="#4a3020" stroke-width="9" fill="none"/>
<ellipse cx="450" cy="247" rx="18" ry="9" fill="#3a261c" opacity=".85"/><ellipse cx="565" cy="247" rx="18" ry="9" fill="#3a261c" opacity=".85"/>
<path d="M500 258L492 316Q510 326 528 318" stroke="#c89878" stroke-width="6" fill="none" opacity=".55"/>
<path d="M378 228C360 150 372 90 420 55C460 25 500 15 545 25C575 30 605 50 625 85C650 130 645 180 634 232C626 184 612 156 600 142C540 130 450 140 414 158C398 180 388 200 378 228Z" fill="url(#h3)"/>
<path d="M430 70C470 40 530 30 580 60C540 50 480 60 440 95Z" fill="#b07a3c" opacity=".8"/>
<path d="M105 1060L165 555L835 555L880 1060Z" fill="url(#shd)" opacity=".3"/></g></svg><div class="nm" style="width:125px"><span class="fw" style="transform:scaleX(0.898)">緑のメンズスーツ</span></div><div class="pr"><span class="fw" style="transform:scaleX(0.992)">15.00 米ドル</span><br><span class="fw" style="transform:scaleX(1.007)">14.000 単位</span></div><div class="pl">+</div></div>
<div class="prd" style="left:427px;top:630px"><svg style="left:258px;top:-3px" width="160" height="175" viewBox="0 0 987 1080"><g filter="url(#soft)"><path d="M490 22C400 30 340 120 320 230C300 320 265 380 245 440C238 475 280 490 330 480L380 560L620 560C660 545 720 565 768 552C796 520 775 470 735 430C695 380 672 300 652 200C632 90 582 25 490 22Z" fill="#6e4628"/>
<path d="M425 390L565 390L590 470L350 470Z" fill="#d29a76"/>
<path d="M180 548C230 502 300 476 352 456L585 461C660 481 750 511 802 562L722 660L280 650Z" fill="url(#lace3)"/>
<path d="M180 548C170 700 185 900 168 1060L285 1060L280 650Z" fill="url(#lace2)"/>
<path d="M802 562C830 700 830 900 822 1060L704 1060L722 660Z" fill="url(#lace2)"/>
<path d="M352 456Q470 500 585 461" stroke="#8ed0ea" stroke-width="14" fill="none"/>
<path d="M280 645C350 602 450 588 520 624C600 600 680 620 722 657C732 800 716 950 706 1060L264 1060C276 900 270 750 280 645Z" fill="url(#dr4)"/>
<path d="M500 118C440 160 398 220 393 290C393 362 430 412 480 428C532 422 584 372 592 290C592 220 560 160 500 118Z" fill="url(#fc4)"/>
<path d="M415 230Q442 220 470 228M520 228Q548 220 575 230" stroke="#8a6040" stroke-width="7" fill="none"/>
<ellipse cx="442" cy="247" rx="18" ry="9" fill="#5a7088" opacity=".85"/><ellipse cx="545" cy="247" rx="18" ry="9" fill="#5a7088" opacity=".85"/>
<path d="M492 262L484 316Q498 326 514 320" stroke="#d09a78" stroke-width="6" fill="none" opacity=".55"/>
<path d="M457 360Q490 348 526 360Q492 384 457 360Z" fill="#c87c7c"/>
<path d="M495 25C400 30 340 120 320 230C300 320 265 380 245 440C240 475 280 490 335 476C372 440 386 380 393 290C398 220 440 160 500 118Z" fill="url(#h4)"/>
<path d="M495 25C585 25 632 90 652 200C672 300 695 380 735 430C775 470 796 520 768 552C700 548 640 505 615 440C595 400 592 350 592 290C592 220 560 160 500 118Z" fill="url(#h4)"/>
<path d="M330 250C310 330 290 390 262 440M660 250C680 340 700 400 745 450" stroke="#d0a070" stroke-width="14" fill="none" opacity=".6"/>
<path d="M168 1060L180 548L802 562L822 1060Z" fill="url(#shd)" opacity=".25"/></g></svg><div class="nm" style="width:56px"><span class="fw" style="transform:scaleX(1.000)">青い服</span></div><div class="pr"><span class="fw" style="transform:scaleX(0.992)">20.00 米ドル</span><br><span class="fw" style="transform:scaleX(1.012)">172.000 単位</span></div><div class="pl">+</div></div>
<div class="prd" style="left:11px;top:808px"><svg style="left:258px;top:-3px" width="160" height="175" viewBox="0 0 987 1080"><g filter="url(#soft)"><path d="M450 20C380 25 340 80 325 160C310 260 295 400 285 490L560 500C640 450 630 200 570 100C550 50 510 20 450 20Z" fill="#5a3822"/>
<path d="M385 370L515 370L535 492L432 612L343 487Z" fill="#dba47c"/>
<path d="M205 790L275 880L255 1060L185 1060C200 960 200 860 205 790Z" fill="#dda680"/>
<path d="M700 750L775 690C800 800 820 950 835 1060L690 1060L640 900Z" fill="#e0aa84"/>
<path d="M345 480L432 612L532 490C600 470 680 460 700 465C780 520 830 580 850 632L772 692L700 762L640 900L645 1060L258 1060L272 880L250 802C200 772 160 742 135 722C150 640 190 560 230 520C270 500 310 490 345 480Z" fill="url(#dr5)"/>
<path d="M432 612L560 760L520 810L280 870M270 930L640 925M520 810L640 880" stroke="#dcc02a" stroke-width="6" fill="none" opacity=".7"/>
<path d="M440 138C390 150 353 200 353 260C353 332 390 392 440 402C492 397 547 332 550 250C547 190 500 143 440 138Z" fill="#e9b48f"/>
<path d="M372 208Q400 198 430 206M470 206Q500 198 530 208" stroke="#5a3a26" stroke-width="7" fill="none"/>
<ellipse cx="400" cy="230" rx="20" ry="11" fill="#2e1c14" opacity=".85"/><ellipse cx="498" cy="234" rx="20" ry="11" fill="#2e1c14" opacity=".85"/>
<path d="M445 245L435 295L462 298" stroke="#d09a74" stroke-width="6" fill="none" opacity=".55"/>
<path d="M410 325Q448 312 488 325Q450 355 410 325Z" fill="#d46a7a"/>
<path d="M450 20C380 25 340 80 325 160C310 260 295 400 285 490L340 482C360 440 372 400 376 350C360 320 352 290 353 260C353 200 390 150 440 138Z" fill="url(#h5)"/>
<path d="M450 20C510 20 550 50 570 100C600 200 620 350 632 452C652 470 662 500 667 560C672 700 642 850 606 935L600 800C590 650 550 520 510 470C530 420 545 340 550 250C547 190 500 150 440 138Z" fill="url(#h5)"/></g></svg><div class="nm" style="width:98px"><span class="fw" style="transform:scaleX(0.941)">黄色いドレス</span></div><div class="pr"><span class="fw" style="transform:scaleX(1.015)">9.50 米ドル</span><br><span class="fw" style="transform:scaleX(1.014)">57.000 単位</span></div></div>
<div class="prd" style="left:427px;top:808px"><svg style="left:258px;top:-3px" width="160" height="175" viewBox="0 0 987 1080"><g filter="url(#soft)"><path d="M150 610C220 570 320 530 392 478L620 478C700 530 790 570 832 600C862 700 878 900 880 1060L125 1060C125 900 130 700 150 610Z" fill="url(#su6)"/>
<path d="M480 450L590 335L606 492L530 552Z" fill="#dcaa92"/>
<path d="M395 470L470 448L530 552L602 478L666 700L652 912L626 1000L485 596Z" fill="#f1f1f5"/>
<path d="M395 470L485 596L526 560L470 448Z" fill="#fafafc"/>
<path d="M512 572L566 558L582 602L642 940L616 996L586 872L532 612Z" fill="#1c1c20"/>
<path d="M392 478L350 546L402 566L602 1002L626 1006L485 596L395 470Z" fill="#2c2629"/>
<path d="M620 478L690 582L660 602L686 702L652 1002L626 1006L652 912L666 700L604 480Z" fill="#2e282b"/>
<path d="M245 700L288 1060" stroke="#2e282c" stroke-width="7" fill="none" opacity=".7"/>
<ellipse cx="600" cy="292" rx="19" ry="38" fill="#e8b8a0"/>
<path d="M330 180C325 250 340 300 370 360L385 412C420 452 460 482 500 472C550 442 577 380 582 300L592 260C562 230 542 180 470 178C420 190 360 190 330 180Z" fill="url(#fc6)"/>
<path d="M345 262Q370 254 395 260M440 258Q470 248 500 254" stroke="#6a4028" stroke-width="8" fill="none"/>
<ellipse cx="370" cy="283" rx="12" ry="8" fill="#5a6a68" opacity=".85"/><ellipse cx="462" cy="277" rx="16" ry="9" fill="#5a6a68" opacity=".85"/>
<path d="M392 300L378 356Q390 366 408 362" stroke="#dcae96" stroke-width="6" fill="none" opacity=".55"/>
<path d="M388 400Q415 406 445 400" stroke="#c47c72" stroke-width="9" fill="none"/>
<path d="M316 140C320 90 360 50 420 40C470 30 540 40 585 80C625 115 628 160 617 205L602 262C582 250 572 222 562 202C542 172 502 170 470 178C420 190 360 190 330 182C322 170 316 155 316 140Z" fill="url(#h6v)"/>
<path d="M125 1060L150 610L832 600L880 1060Z" fill="url(#shd)" opacity=".3"/></g></svg><div class="nm" style="width:142px"><span class="fw" style="transform:scaleX(0.972)">黒人男性用スーツ</span></div><div class="pr"><span class="fw" style="transform:scaleX(0.992)">15.00 米ドル</span><br><span class="fw" style="transform:scaleX(1.014)">71.000 単位</span></div></div>

<div class="a" style="left:894px;top:0;width:1026px;height:1080px;border:1px solid #b4b4b4;border-bottom-color:#c8c8c8"></div>
<div class="hdr" style="left:895px;top:1px;width:1024px;height:42px"></div>
<div class="t" style="left:895px;width:1024px;top:11px;text-align:center;color:#fff;font-size:25px"><span class="fw fc" style="transform:scaleX(0.917)">セール</span></div>
<svg class="a" style="left:1885px;top:9px" width="26" height="26" viewBox="0 0 28 28"><path d="M5 5L23 23M23 5L5 23" stroke="#fff" stroke-width="5.500" stroke-linecap="round"/><path d="M5 5L23 23M23 5L5 23" stroke="#111" stroke-width="3" stroke-linecap="round"/></svg>
<!-- row 1 -->
<div class="lbl" style="left:897px;top:54px"><span class="fw" style="transform:scaleX(1.048)">売り手</span></div>
<div class="a" style="left:988px;top:43px;width:35px;height:35px;border:1px solid #d2d2d2;border-radius:3px;background:linear-gradient(#f6f6f6,#e6e6e6)">
<svg class="a" style="left:0px;top:-1px" width="32" height="34" viewBox="0 0 30 32"><defs><linearGradient id="lk" x1="0" y1="0" x2="0" y2="1"><stop offset="0" stop-color="#ffe07a"/><stop offset=".5" stop-color="#f0b030"/><stop offset="1" stop-color="#d88a10"/></linearGradient><linearGradient id="lks" x1="0" y1="0" x2="1" y2="0"><stop offset="0" stop-color="#8a8f96"/><stop offset=".5" stop-color="#e8eaee"/><stop offset="1" stop-color="#8a8f96"/></linearGradient></defs><path d="M7 16V10.500C7 5.500 10.500 3 15 3S23 5.500 23 10.500V16" fill="none" stroke="url(#lks)" stroke-width="3.600"/><path d="M7 16V10.500C7 5.500 10.500 3 15 3S23 5.500 23 10.500V16" fill="none" stroke="#6e7378" stroke-width=".5" transform="translate(0,-.2)"/><rect x="3.500" y="14.500" width="23" height="15.500" rx="1.500" fill="url(#lk)" stroke="#b8760a" stroke-width=".8"/><circle cx="15" cy="20.500" r="2.100" fill="#1a1a1a"/><path d="M14 21h2l.8 5.500h-3.600z" fill="#1a1a1a"/></svg></div>
<div class="inp dis" style="left:1024px;top:46px;width:446px;height:29px"></div>
<div class="t" style="left:1026px;top:52px;font-family:'Liberation Serif','Noto Serif CJK JP',serif;font-weight:bold;font-size:15px;color:#b4b4b4;font-feature-settings:normal"><span class="fw" style="transform:scaleX(1.141)">従業員# 2</span></div>
<div class="a" style="left:1452px;top:59px;border:4px solid transparent;border-top:4px solid #c4c4c4;border-bottom:0"></div>
<div class="inp dis" style="left:1472px;top:46px;width:446px;height:29px"></div>
<div class="t" style="left:1475px;top:52px;font-family:'Liberation Serif','Noto Serif CJK JP',serif;font-weight:bold;font-size:15px;color:#b4b4b4;font-feature-settings:normal"><span class="fw" style="transform:scaleX(1.058)">正式名称</span></div>
<div class="a" style="left:1901px;top:59px;border:4px solid transparent;border-top:4px solid #c4c4c4;border-bottom:0"></div>
<!-- row 2 -->
<div class="lbl" style="left:897px;top:85px"><span class="fw" style="transform:scaleX(0.895)">クライアント</span></div><div class="lbl" style="left:952px;top:85px">(F10)</div>
<div class="inp" style="left:1024px;top:77px;width:446px;height:29px"></div>
<div class="inp dis" style="left:1472px;top:77px;width:446px;height:29px"></div>
<div class="t bn" style="left:1474px;top:84px;font-size:13px;color:#b4b4b4;font-stretch:condensed"><span class="fw" style="transform:scaleX(0.980)">09.12.2022</span></div>
<div class="a" style="left:1901px;top:90px;border:4px solid transparent;border-top:4px solid #c4c4c4;border-bottom:0"></div>
<!-- row 3 -->
<div class="t" style="left:897px;top:113px;font-size:14px;font-weight:bold;color:#222"><span class="fw" style="transform:scaleX(0.986)">デフォルトのクライアント, 割引なし</span></div>
<div class="bar" style="top:137px"><span class="fw fc" style="transform:scaleX(0.977)">販売リスト</span></div>
<div class="lbl" style="left:900px;top:167px"><span class="fw" style="transform:scaleX(1.020)">金額(F7)とバーコード(F8)</span></div>
<div class="lbl" style="left:1472px;top:167px"><span class="fw" style="transform:scaleX(1.121)">商品名</span></div>
<div class="inp" style="left:899px;top:182px;width:99px;height:29px"></div>
<div class="t bn" style="left:902px;top:187px;font-size:19px;color:#333;font-stretch:condensed">1.000</div>
<div class="a" style="left:982px;top:189px;border:3px solid transparent;border-bottom:3px solid #777;border-top:0"></div>
<div class="a" style="left:982px;top:202px;border:3px solid transparent;border-top:3px solid #777;border-bottom:0"></div>
<div class="t" style="left:1005px;top:187px;font-size:17px;color:#555">x</div>
<div class="inp" style="left:1024px;top:182px;width:446px;height:29px"></div>
<div class="t bn" style="left:1026px;top:187px;font-size:19px;color:#333;font-stretch:condensed"><span class="fw" style="transform:scaleX(1.010)">0000000000000</span></div>
<div class="inp" style="left:1472px;top:182px;width:446px;height:29px"></div>
<!-- grid -->
<div class="th" style="left:895px;width:12px;border-left:1px solid #b8b8b8;padding:0"></div>
<div class="th" style="left:907px;width:461px"><span class="fw" style="transform:scaleX(1.031)">名前</span></div>
<div class="th" style="left:1368px;width:140px"><span class="fw" style="transform:scaleX(0.833)">ディスカウント</span></div>
<div class="th" style="left:1508px;width:137px"><span class="fw" style="transform:scaleX(1.031)">価格</span></div>
<div class="th" style="left:1645px;width:99px">量</div>
<div class="th" style="left:1744px;width:174px">和</div>
<div class="ind" style="top:260px"></div><div class="ind" style="top:307px"></div><div class="ind" style="top:354px"></div><div class="ind" style="top:401px"></div>
<div class="a" style="left:899px;top:420px;border:4px solid transparent;border-left:4px solid #444;border-right:0"></div>
<div class="row" style="top:260px;background:#d9f0ff"><span style="left:2px"><span class="fw" style="transform:scaleX(1.005)">1. 青い服, 10004, 単位</span></span><span class="r" style="right:412px">0.00</span><span class="r" style="right:275px">20.00</span><span class="r" style="right:176px">1.000</span><span class="r" style="right:2px">20.00</span></div>
<div class="row" style="top:307px;background:#dffbe3"><span style="left:2px"><span class="fw" style="transform:scaleX(0.939)">2. 緑のメンズスーツ, 10003, 単位</span></span><span class="r" style="right:412px">0.00</span><span class="r" style="right:275px">15.00</span><span class="r" style="right:176px">1.000</span><span class="r" style="right:2px">15.00</span></div>
<div class="row" style="top:354px;background:#d9f0ff"><span style="left:2px"><span class="fw" style="transform:scaleX(0.924)">3. ブルーのメンズスーツ, 10002, 単位</span></span><span class="r" style="right:412px">0.00</span><span class="r" style="right:275px">15.00</span><span class="r" style="right:176px">1.000</span><span class="r" style="right:2px">15.00</span></div>
<div class="row" style="top:401px;background:#dffbe3"><span style="left:2px"><span class="fw" style="transform:scaleX(0.937)">4. ピンクのドレス, 10006, 単位</span></span><span class="r" style="right:412px">0.00</span><span class="r" style="right:275px">9.00</span><span class="r" style="right:176px">1.000</span><span class="r" style="right:2px">9.00</span></div>
<!-- footer -->
<div class="a" style="left:896px;top:892px;width:1022px;height:43px;background:#f5f5f5;border-top:1px solid #c0c0c0"></div>
<div class="inp" style="left:909px;top:895px;width:457px;height:37px;border-color:#d0d0d0"></div>
<div class="t bn" style="left:915px;top:904px;font-size:20px;color:#333;font-stretch:condensed">59.00</div>
<div class="inp" style="left:1370px;top:895px;width:136px;height:37px;border-color:#d0d0d0"></div>
<div class="t bn" style="left:1370px;width:130px;text-align:right;top:904px;font-size:20px;color:#333;font-stretch:condensed">0</div>
<div class="inp" style="left:1647px;top:895px;width:95px;height:37px;border-color:#d0d0d0"></div>
<div class="t bn" style="left:1647px;width:89px;text-align:right;top:904px;font-size:20px;color:#333;font-stretch:condensed">4</div>
<div class="bar" style="top:935px"><span class="fw fc" style="transform:scaleX(1.083)">支払い</span></div>
<div class="lbl" style="left:897px;top:965px"><span class="fw" style="transform:scaleX(0.994)">印刷チェック(F11)</span></div>
<div class="lbl" style="left:1152px;top:965px"><span class="fw" style="transform:scaleX(1.040)">払いの種類 (F12)</span></div>
<div class="lbl" style="left:1408px;top:965px"><span class="fw" style="transform:scaleX(0.981)">クライアントからの合計(F9)</span></div>
<div class="lbl" style="left:1665px;top:965px"><span class="fw" style="transform:scaleX(1.037)">奇妙なお金</span></div>
<div class="inp" style="left:896px;top:980px;width:248px;height:29px"></div>
<div class="t" style="left:898px;top:987px;font-size:14px;font-weight:500;color:#222"><span class="fw" style="transform:scaleX(1.024)">チェックなし(F11)</span></div>
<div class="a" style="left:1127px;top:992px;border:4px solid transparent;border-top:4px solid #666;border-bottom:0"></div>
<div class="inp" style="left:1152px;top:980px;width:249px;height:29px"></div>
<div class="t" style="left:1155px;top:987px;font-size:14px;font-weight:500;color:#222"><span class="fw" style="transform:scaleX(1.161)">現金</span></div>
<div class="a" style="left:1383px;top:992px;border:4px solid transparent;border-top:4px solid #666;border-bottom:0"></div>
<div class="inp" style="left:1408px;top:980px;width:248px;height:29px;background:#3cab3c;border-color:#2a5a2a"></div>
<div class="t bn" style="left:1410px;top:985px;font-size:19px;color:#2f3a2f;font-stretch:condensed">0.00</div>
<div class="a" style="left:1639px;top:987px;border:3px solid transparent;border-bottom:3px solid #4a7a4a;border-top:0"></div>
<div class="a" style="left:1639px;top:999px;border:3px solid transparent;border-top:3px solid #4a7a4a;border-bottom:0"></div>
<div class="t bn" style="left:1665px;top:984px;font-size:19px;color:#333;font-stretch:condensed">-59.00</div>
<div class="btn" style="left:895px;background:#a5ec94"><span class="fw fc" style="transform:scaleX(0.961)">売る</span></div>
<div class="btn" style="left:1151px;background:#ffffa5"><span class="fw fc" style="transform:scaleX(1.012)">延期</span></div>
<div class="btn" style="left:1407px;background:#ffdca0"><span class="fw fc" style="transform:scaleX(0.931)">支払いはありませんよ</span></div>
<div class="btn" style="left:1663px;background:#ff9c9c"><span class="fw fc" style="transform:scaleX(0.885)">キャンセル</span></div>

</body>
</html>
